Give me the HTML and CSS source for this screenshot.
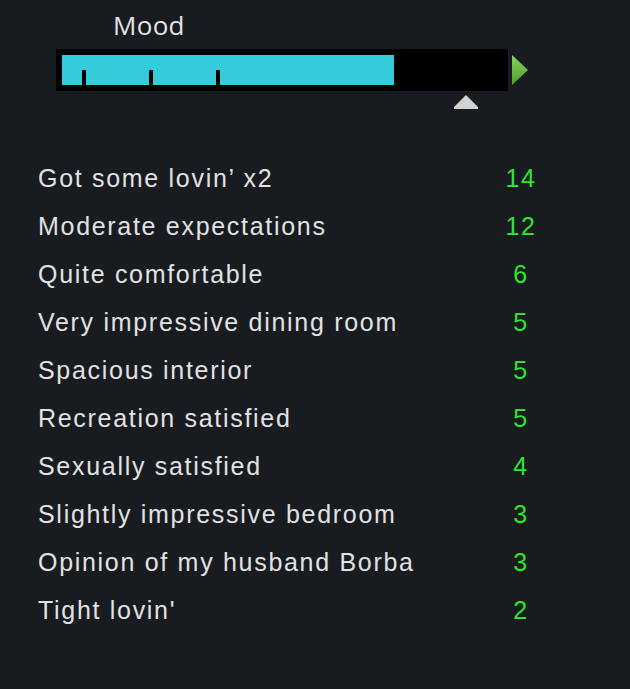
FILE: index.html
```html
<!DOCTYPE html>
<html lang="en">
<head>
    <meta charset="UTF-8">
    <meta name="viewport" content="width=device-width, initial-scale=1.0">
    <title>Mood</title>
    <link rel="stylesheet" href="styles.css">
</head>
<body>
    <div class="panel">
        <div class="mood">
            <div class="mood-title">Mood</div>
            <div class="mood-row">
                <div class="bar">
                    <div class="fill" style="width: 332px;">
                        <span class="tick"></span>
                        <span class="tick"></span>
                        <span class="tick"></span>
                    </div>
                </div>
                <svg class="arrow" width="16" height="30" viewBox="0 0 16 30">
                    <defs>
                        <linearGradient id="g" x1="0" y1="0" x2="0" y2="1">
                            <stop offset="0" stop-color="#8fd45a"/>
                            <stop offset="1" stop-color="#4c9e2c"/>
                        </linearGradient>
                    </defs>
                    <polygon points="0,0 16,15 0,30" fill="url(#g)"/>
                </svg>
            </div>
            <div class="marker-row">
                <svg class="marker" width="24" height="14" viewBox="0 0 24 14">
                    <polygon points="12,0 24,12 24,14 0,14 0,12" fill="#d2d2d2"/>
                </svg>
            </div>
        </div>

        <ul class="thoughts">
            <li><span class="label">Got some lovin’ x2</span><span class="value">14</span></li>
            <li><span class="label">Moderate expectations</span><span class="value">12</span></li>
            <li><span class="label">Quite comfortable</span><span class="value">6</span></li>
            <li><span class="label">Very impressive dining room</span><span class="value">5</span></li>
            <li><span class="label">Spacious interior</span><span class="value">5</span></li>
            <li><span class="label">Recreation satisfied</span><span class="value">5</span></li>
            <li><span class="label">Sexually satisfied</span><span class="value">4</span></li>
            <li><span class="label">Slightly impressive bedroom</span><span class="value">3</span></li>
            <li><span class="label">Opinion of my husband Borba</span><span class="value">3</span></li>
            <li><span class="label">Tight lovin'</span><span class="value">2</span></li>
        </ul>
    </div>
</body>
</html>
```

FILE: styles.css
```css
html,body,div,span,ul,li{margin:0; padding:0;}
body{background:#181b20; font-family:"Liberation Sans", Arial, sans-serif; color:#e2e2e2;}

.panel{width:630px; height:689px; padding-top:10px; box-sizing:border-box;}

/* mood meter */
.mood{padding-left:56px;}
.mood-title{padding-left:57px; font-family:"Open Sans", "Liberation Sans", sans-serif; font-size:26px; line-height:30px; color:#e4e4e4; letter-spacing:0.3px;}
.mood-row{display:flex; align-items:center; gap:4px; margin-top:9px;}
.bar{width:452px; height:42px; background:#000; padding:6px; box-sizing:border-box;}
.fill{height:30px; background:#34ccda; display:flex; align-items:flex-end; padding-left:20px; gap:63px; box-sizing:border-box;}
.tick{width:4px; height:15px; background:#000;}
.arrow{display:block;}
.marker-row{padding-left:398px; height:18px; padding-top:4px; box-sizing:border-box;}
.marker{display:block;}

/* thought list */
.thoughts{list-style:none; margin-top:45px; padding-left:38px;}
.thoughts li{display:flex; height:48px; line-height:48px; font-size:25px; letter-spacing:1.7px;}
.label{width:463px;}
.value{width:40px; text-align:center; color:#2ee52e;}
```
